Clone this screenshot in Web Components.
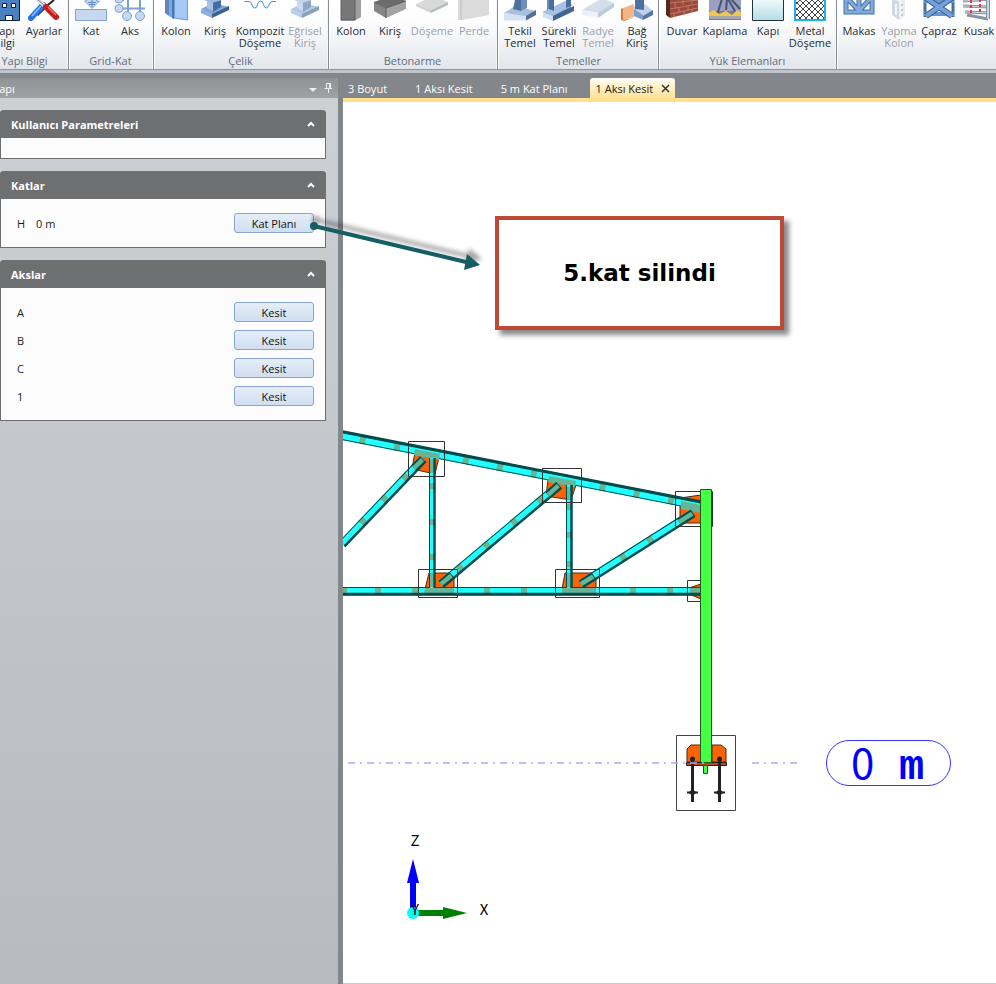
<!DOCTYPE html>
<html lang="tr">
<head>
<meta charset="utf-8">
<title>Yapı - 1 Aksı Kesit</title>
<style>
html,body{margin:0;height:100%}
body{font-family:"Open Sans","Noto Sans",sans-serif;font-size:11px;color:#1e1e1e;background:#83868b;overflow:hidden}
</style>
</head>
<body>
<structure-app></structure-app>
<script>
const define=(name,html,setup)=>customElements.define(name,class extends HTMLElement{
  constructor(){super();this.attachShadow({mode:"open"}).innerHTML=typeof html==="function"?html(this):html;if(setup)setup(this);}
});

/* Ribbon artwork: the lower 21 rows of each 32px icon. */
const icons={
building:`<path fill="#4a7fc0" stroke="#0b1d3a" d="M0-2h31.500v22.500H0z"/><path fill="#fff" stroke="#0b1d3a" d="M6 3.500h4v4H6zM14.500 3.500h4v4h-4zM23.500 3.500h4v4h-4zM6 12.500h4v4H6zM17.500 15.500h7v5h-7z"/>`,
tools:`<path d="M26 0 10 13" stroke="#222" stroke-width="2"/><path d="M18 4 8 14" stroke="#1c3d7c" stroke-width="6"/><path d="M15 5 3 18" stroke="#2a75e0" stroke-width="6" stroke-linecap="round"/><path d="M13 6 4 16" stroke="#8fc0ff" stroke-width="1.500"/><path d="m9-1 9 8" stroke="#d9dee5" stroke-width="4"/><path d="m9-1 9 8" stroke="#7d8792" stroke-width="1"/><path d="m18 7 10 10" stroke="#c71d16" stroke-width="6" stroke-linecap="round"/><path d="m20 7 8 8" stroke="#f5776d" stroke-width="1.500"/>`,
floor:`<path fill="#c7d7ee" stroke="#7fa3d4" d="M.5 9.500h31v11H.5z"/><path fill="#c7d7ee" stroke="#7fa3d4" d="M11.500-1v2h-2L17 8.500 24.500 1h-3v-2z"/><path stroke="#5d8ccb" fill="none" d="M13 2.500h8M14 4.500h6M17 0v7"/>`,
axes:`<g fill="none" stroke="#7aa0d5" stroke-width="2"><path d="M6 8.500h25M14 0v12M26 0v12M6 0h4"/></g><g fill="#c7d7ee" stroke="#7fa3d4"><circle cx="5" cy="-1" r="4"/><circle cx="5" cy="8.500" r="4"/><circle cx="13" cy="16" r="4.500"/><circle cx="26" cy="16" r="4.500"/></g>`,
steelcol:`<path fill="#5f87bd" d="M5-1h4v17l-4-3z"/><path fill="#7aa9e5" d="M9-1h5v20l-5-3z"/><path fill="#a6c8f7" d="M14-1h14v21.500l-14-2z"/><path fill="#4d78b1" d="M12-1h2v20l-2-1z"/><path fill="none" stroke="#739dd4" d="M14.500 0v18l13 2V0"/>`,
steelbeam:`<path fill="#86a5cf" d="M2 9 14 3l16 4-17 8z"/><path fill="#8fb0dd" d="M2 9v4l11 5v-4z"/><path fill="#3c6194" d="m13 14 17-8v4L13 18z"/><path fill="#a9c3e6" d="m8 0 6 2v9l-6-3z"/><path fill="#476d9f" d="m14 2 8-3v8l-8 5z"/><path fill="#9bb9e0" d="M2-1h24L13 3z"/>`,
composite:`<path d="M.5 1.500H5Q7 1.500 8 5t3 3q2 0 2.500-3.500t3-3.500q2 0 3 3.500T22 8q2 0 3-3t3-3.500h4" fill="none" stroke="#3e91d2"/>`,
rccol:`<path fill="#777" d="M6-1h14v21.500H6z"/><path fill="#9f9f9f" d="m20-1 6-1v19l-6 3.500z"/><path d="M6 0v20h14V0" fill="none" stroke="#606060"/>`,
rcbeam:`<path fill="#6b6b6b" d="M0 2 19-5l13 6-19 7z"/><path fill="#858585" d="M0 2v9l12 7V8z"/><path fill="#a3a3a3" d="m12 8 20-7v8l-20 9z"/><path d="m0 2 12 6 20-7M12 8v10" fill="none" stroke="#5c5c5c"/>`,
slab:`<path fill="#bfc1c4" d="M0 4 18-4l14 6-17 8z"/><path fill="#8f9194" d="m15 10 17-8v3l-17 8z"/><path fill="#b0b1b4" d="m0 4 15 6v3L0 6z"/>`,
wall:`<path fill="#c4c4c4" d="M0-1h31v16L4 20H0z"/><path d="M3-1v21" stroke="#999"/>`,
pad:`<path fill="#a9bfdc" d="M0 13 11 6l21 5-10 6z"/><path fill="#4d719f" d="m11 0 6-1v12l-8-2z"/><path fill="#6d8fbd" d="M17-1h6v9l-6 3z"/><path fill="#d3e2f4" d="m0 13 22 3v4.500H0z"/><path fill="#526f96" d="m22 16 10-6v5l-10 5.500z"/>`,
strip:`<path fill="#6c8ebb" d="M4 0h5v11l14-7V-1h5v10L9 20l-9-4v-4l4-2z"/><path fill="#a8c1e3" d="M0 12 22 1l8 4-20 11z"/><path fill="#42648f" d="m10 16 21-10v5L10 21z"/><path fill="#d1dff2" d="m0 12 10 4v5L0 17z"/><path fill="#496d9c" d="M6-1h5v12l-5-2zm17 0h5v7l-5 2z"/>`,
raft:`<path fill="#b8cadd" d="M0 10 20-2l12 5-15 10z"/><path fill="#e1ebf5" d="m0 10 16 3v5L0 15z"/><path fill="#8da8c4" d="m16 13 16-10v4L16 18z"/>`,
tie:`<path fill="#bfd3ee" d="m12 7 12-3 8 7-10 6-10-2z"/><path fill="#4d719f" d="M14-1h9v11l-9-1z"/><path fill="#7f9fca" d="m13 9 9 6v5l-9-4z"/><path fill="#57779f" d="m22 16 10-6v5l-10 5z"/><path fill="#f3b584" d="m2 8 11-4v13L2 20z"/><path fill="#d47b3a" d="m2 8-2 1v11l3 1 9-3-10 2z"/>`,
brick:`<path fill="#9a4a3c" d="M4-1h28v12L4 18z"/><path fill="#562923" d="M0 0h4v18l-4-3z"/><path d="M4 3 32 0M4 9l28-5M4 14l28-6M9 2v6m8-8v5m9-6v5M13 7v6m9-7v5M8 13v4m10-6v4m8-6v3" stroke="#c07a66" fill="none"/>`,
cladding:`<path fill="#73799f" d="M0-1h32v21H0z"/><path fill="#9aa0c4" d="M0-1h32v12H0z"/><path d="M13-1 8 15M18-1l-1 11M19-1l8 14M22-1l9 10" stroke="#4c5272" stroke-width="2"/><path fill="#f0c94a" d="m0 12 5-2 5 4 7-3 6 4 5-5 4 2v5H0z"/><path fill="#a6a7ae" d="M0 16h32v3H0z"/>`,
door:`<defs><linearGradient id="g" x2="0" y2="1"><stop stop-color="#f4fbfc"/><stop offset="1" stop-color="#b4dce5"/></linearGradient></defs><path fill="url(#g)" stroke="#1e333c" d="M.5-2h31v22.500H.5z"/>`,
mesh:`<defs><pattern id="m" width="6" height="6" patternUnits="userSpaceOnUse"><path d="M0 0l6 6M6 0 0 6" stroke="#444"/></pattern></defs><path fill="#fff" d="M0-1h32v22H0z"/><path fill="url(#m)" d="M0-1h32v22H0z"/><path fill="none" stroke="#1bb4e8" stroke-width="2" d="M1-1v21h30V-1"/>`,
truss:`<path fill="none" stroke="#45709e" stroke-width="5" d="M3-1v13h26V-1M5-1l11 12L27-1M16 0v12"/><path fill="none" stroke="#7fabdf" stroke-width="3" d="M3-1v13h26V-1M5-1l11 12L27-1M16 0v12"/>`,
built:`<path fill="#b3c0cf" d="m9-1 7 2v19l-7-5z"/><path fill="#d9e2eb" d="m16 1 6-2v17l-6 4z"/><path d="M18 2v15m-5-13v11" stroke="#eff3f7" stroke-width="2"/><path d="M19 4v2m0 3v2m0 3v2" stroke="#97a6b6" stroke-width="2"/>`,
brace:`<path d="M2-1v18M30-1v18" stroke="#45709e" stroke-width="3"/><path d="M1 14h30M1 1h30" stroke="#6a98cf" stroke-width="4"/><path d="M3-2 29 16M29-2 3 16" stroke="#335f94" stroke-width="6"/><path d="M3-2 29 16M29-2 3 16" stroke="#74a1d7" stroke-width="4"/>`,
purlin:`<path d="m0 1 27-2M0 6l27 1M2 12l25 1M4 15l21 4" stroke="#8793a5" stroke-width="3"/><path d="m0 1 27-2M0 6l27 1M2 12l25 1" stroke="#cbd3de"/><path d="M8 0v13M17-1v15" stroke="#dd3940" stroke-width="2" stroke-dasharray="3 2"/><path d="M25-1v20" stroke="#8391a5" stroke-width="4"/><path d="M25-1v20" stroke="#cbd3de" stroke-width="2"/>`
};

define("ribbon-item",el=>`<style>
:host{display:block;flex:0 0 auto;width:var(--item-width,38px)}
button{display:flex;flex-direction:column;align-items:center;width:100%;padding:0;border:0;background:none;font:inherit;line-height:12px;color:#262b33;white-space:nowrap}
:host([dim]) button{color:#9ba0a8}
svg{display:block;width:32px;height:21px;margin-bottom:4px}
:host([dim]) svg{opacity:.6}
</style><button type="button"${el.hasAttribute("dim")?" disabled":""}><svg viewBox="0 0 32 21" aria-hidden="true" fill="none">${icons[el.getAttribute("icon")]}</svg>${el.getAttribute("label").split("|").map(t=>`<span>${t}</span>`).join("")}</button>`);

define("ribbon-group",el=>`<style>
:host{display:flex;flex-direction:column;justify-content:space-between;flex:0 0 auto;box-sizing:border-box;height:69px;padding:0 4px 0 3px;border-right:1px solid #888c93;box-shadow:inset -1px 0 #f4f6f8,inset 1px 0 #fff}
.items{display:flex;gap:var(--item-gap,1px)}
.name{line-height:16px;text-align:center;color:#626b7e}
</style><div class="items"><slot></slot></div><div class="name">${el.getAttribute("name")||""}</div>`);

define("ribbon-bar",`<style>
:host{display:flex;height:69px;overflow:hidden;background:linear-gradient(#fff 0,#fdfdfe 32%,#e2e6ec 100%);border-bottom:1px solid #8f939a;box-shadow:0 3px #c0c5cd}
.first{margin-left:-18px}
.tight{padding-right:2px}
.roomy{padding-left:4px}
.last{flex:1 0 auto}
.wide{--item-width:44px}.wider{--item-width:50px}.facing{--item-width:46px}
</style>
<ribbon-group class="first" name="Yapı Bilgi"><ribbon-item icon="building" label="Yapı|Bilgi"></ribbon-item><ribbon-item icon="tools" label="Ayarlar" style="--item-width:40px"></ribbon-item></ribbon-group>
<ribbon-group name="Grid-Kat"><ribbon-item icon="floor" label="Kat"></ribbon-item><ribbon-item icon="axes" label="Aks"></ribbon-item></ribbon-group>
<ribbon-group name="Çelik"><ribbon-item icon="steelcol" label="Kolon"></ribbon-item><ribbon-item icon="steelbeam" label="Kiriş"></ribbon-item><ribbon-item class="wider" icon="composite" label="Kompozit|Döşeme"></ribbon-item><ribbon-item dim icon="steelbeam" label="Eğrisel|Kiriş"></ribbon-item></ribbon-group>
<ribbon-group name="Betonarme"><ribbon-item icon="rccol" label="Kolon"></ribbon-item><ribbon-item icon="rcbeam" label="Kiriş"></ribbon-item><ribbon-item dim class="wide" icon="slab" label="Döşeme"></ribbon-item><ribbon-item dim icon="wall" label="Perde"></ribbon-item></ribbon-group>
<ribbon-group class="tight" name="Temeller"><ribbon-item icon="pad" label="Tekil|Temel"></ribbon-item><ribbon-item icon="strip" label="Sürekli|Temel"></ribbon-item><ribbon-item dim icon="raft" label="Radye|Temel"></ribbon-item><ribbon-item icon="tie" label="Bağ|Kiriş"></ribbon-item></ribbon-group>
<ribbon-group class="roomy" name="Yük Elemanları"><ribbon-item icon="brick" label="Duvar"></ribbon-item><ribbon-item class="facing" icon="cladding" label="Kaplama"></ribbon-item><ribbon-item icon="door" label="Kapı"></ribbon-item><ribbon-item class="wide" icon="mesh" label="Metal|Döşeme"></ribbon-item></ribbon-group>
<ribbon-group class="last" style="--item-gap:2px"><ribbon-item icon="truss" label="Makas"></ribbon-item><ribbon-item dim icon="built" label="Yapma|Kolon"></ribbon-item><ribbon-item icon="brace" label="Çapraz"></ribbon-item><ribbon-item icon="purlin" label="Kusak"></ribbon-item></ribbon-group>`);

define("side-section",el=>`<style>
:host{display:block;border:1px solid #6d6e70;border-top:0;border-radius:4px 4px 0 0;background:#fcfcfc}
h2{display:flex;align-items:center;justify-content:space-between;margin:0 -1px;height:28px;padding:0 11px;border-radius:4px 4px 0 0;background:#6e6f71;color:#fff;font:inherit;font-weight:700}
h2 button{display:flex;padding:0;border:0;background:none;color:#fff}
.body{display:flex;flex-direction:column;gap:8px;padding:14px 11px 14px 16px}
:host([empty]) .body{height:20px;padding:0}
</style><h2>${el.getAttribute("heading")}<button type="button" aria-label="Daralt"><svg width="8" height="6" fill="none" stroke="currentColor" stroke-width="2"><path d="m1 5 3-3 3 3"/></svg></button></h2><div class="body"><slot></slot></div>`);

define("section-row",el=>`<style>
:host{display:flex;align-items:center;height:20px}
.key{min-width:19px}
button{margin-left:auto;width:80px;height:20px;padding:0;border:1px solid #86a5d0;border-radius:3px;background:linear-gradient(#e6eef8,#cfdef1);font:inherit;color:#111}
</style><span class="key" id="k">${el.getAttribute("key")}</span><span>${el.getAttribute("value")||""}</span><button type="button" id="b" aria-labelledby="k b">${el.getAttribute("action")}</button>`);

define("side-panel",`<style>
:host{display:block;background:linear-gradient(#cdd0d5,#b7bbc0);border-radius:0 3px 0 0}
header{display:flex;align-items:center;height:20px;background:linear-gradient(#909396,#a0a2a5);color:#fff;border-radius:0 3px 0 0;overflow:hidden}
.title{margin-left:-7px;flex:1}
header svg{display:block;margin-right:6px}
.stack{display:flex;flex-direction:column;gap:12px;padding:12px 12px 12px 0}
</style>
<header><span class="title">Yapı</span><svg width="24" height="12" fill="none" stroke="#eee"><path fill="#eee" stroke="none" d="M1 6h8L5 10z"/><path d="M18.500 6V1.500h4V6M16.500 6.500h8M20.500 7v4M21.500 2v4"/></svg></header>
<div class="stack">
<side-section heading="Kullanıcı Parametreleri" empty></side-section>
<side-section heading="Katlar"><section-row key="H" value="0 m" action="Kat Planı"></section-row></side-section>
<side-section heading="Akslar"><section-row key="A" action="Kesit"></section-row><section-row key="B" action="Kesit"></section-row><section-row key="C" action="Kesit"></section-row><section-row key="1" action="Kesit"></section-row></side-section>
</div>`);

define("view-tabs",`<style>
:host{display:flex;height:20px;padding-left:5px;gap:28px;border-bottom:4px solid #ffe08f}
button{border:0;padding:0;background:none;color:#fff;font:inherit;white-space:nowrap}
.active{display:flex;align-items:center;gap:8px;margin-left:-6px;padding:0 5px 0 6px;background:linear-gradient(#fffef8,#ffe190);color:#222;border-radius:3px 3px 0 0}
</style><button type="button">3 Boyut</button><button type="button">1 Aksı Kesit</button><button type="button">5 m Kat Planı</button><button type="button" class="active">1 Aksı Kesit<svg width="9" height="9" stroke="#333" stroke-width="1.500"><path d="m1 1 7 7M8 1 1 8"/></svg></button>`);

/* Steel section with a cyan flange, a dark web line and stitch plates. */
const member=(x1,y1,x2,y2,w,marks,side=1)=>{
  const L=Math.hypot(x2-x1,y2-y1),a=Math.atan2(y2-y1,x2-x1)*180/Math.PI,e=side>0?w/2-.5:-w/2+.5;
  return `<g transform="translate(${x1} ${y1}) rotate(${a})"><path fill="#2ff" d="M0 ${-w/2}H${L}V${w/2}H0z"/>${marks.map(m=>`<path fill="#66b596" d="M${m-3} ${-w/2}h6v${w}h-6z"/>`).join("")}<path stroke="#004c4c" stroke-width="1" d="M0 ${-e}H${L}"/><path stroke="#004c4c" stroke-width="2.500" d="M0 ${e}H${L}"/></g>`;
};
const chordMarks=[362.7,397.3,466,500,534,602.7,636.7,671].map(x=>(x-342)*1.0188);
const stub=(x,y,dx,dy)=>`<path stroke="#004c4c" stroke-width="8" d="M${x} ${y}l${dx} ${dy}"/><path stroke="#66b596" stroke-width="4.500" d="M${x} ${y}l${dx*.94} ${dy*.94}"/>`;
define("model-view",`<style>
:host{display:block;position:relative;overflow:hidden;background:#fff;border-bottom:1px solid #c8cbd0}
svg{position:absolute;inset:0;width:100%;height:100%}
.axis{font:15px "Noto Sans CJK JP",sans-serif;fill:#000;text-anchor:middle}
.level{font:42px "Noto Sans CJK JP",sans-serif;fill:#00f}
.unit{font-family:"Liberation Mono",monospace;font-weight:700}
</style>
<svg fill="none"><g transform="translate(-343 -102)">
<g fill="#ff6200" stroke="#4c2a10"><path d="m415 452 24 5-4 17-23-5zM548 480l28 5-5 15-25-4zM680 498l21-3v28h-21zM429 573h25v16h-29zM565 573h31v16h-34zM701 584l-12 4v6l12 5z"/></g>
${member(342,435.5,702,506,9,chordMarks,-1)}
${member(342,591,702,591,8,[2,36,73,145,182,291,328])}
<path fill="#66b596" d="m415 449 25 5-1 6-25-5zM549 476l27 5-1 6-27-5zM681 501l20 4v8l-20-4zM425 588h29v5h-30zM562 588h34v5h-34zM690 588h11v5h-11z"/>
<path stroke="#004c4c" stroke-width="2.500" d="m342 432 360 70.500M342 594h360"/>
${member(342,544,423,459,8,[31,62,92])}
${member(432,458,432,588,6,[28,64,99],-1)}
${member(441,584,559,485,8,[25,60,96,130])}
${member(569,485,569,588,6,[22,50,79],-1)}
${member(581,584,693,513,8,[50,82])}
${stub(414,468,9,-9)}${stub(441,584,11,-9)}${stub(548,495,11,-10)}${stub(581,584,13,-8)}${stub(679,522,14,-9)}
<path stroke="#66b596" stroke-width="3" d="M431.500 459v14M568.500 487v13M431.500 573v14M568.500 573v14"/>
<path stroke="#333" d="M408.500 441.500h36v35h-36zM542.500 468.500h39v34h-39zM418.500 569.500h39v28h-39zM555.500 569.500h44v28h-44zM675.500 491.500h37v35h-37zM687.500 580.500h14v21h-14z"/>
<path stroke="#444" d="M676.500 735.500h59v75h-59z"/>
<path fill="#ff6200" stroke="#4c2a10" d="M687 762v-13l4-4h10v17zM712 762v-17h9l5 4v13z"/><path fill="#b94b10" stroke="#222" d="M686.500 762.500h40v3h-40z"/>
<path fill="#4f4" stroke="#175c17" d="M703.500 765.500h4v8h-4zM700.500 489.500h11v273h-11z"/>
<path stroke="#222" stroke-width="3" d="M692.500 757v45M719.500 757v45"/><path stroke="#222" stroke-width="2" d="M687 792.500h11M714 792.500h11"/><path fill="#222" d="m692.500 789 4 3.500-4 3.500-4-3.500zM719.500 789l4 3.500-4 3.500-4-3.500z"/><circle cx="692.500" cy="759" r="2.500" fill="#222"/><circle cx="719.500" cy="759" r="2.500" fill="#222"/>
<path stroke="#aaf" stroke-width="1.500" stroke-dasharray="7 5 2 5" d="M348 763h361M752 763h46"/>
<rect x="826.500" y="740.500" width="124" height="45" rx="22.500" stroke="#33f"/>
<text class="level" y="779"><tspan x="851">0 </tspan><tspan class="unit" x="899">m</tspan></text>
<path fill="#00f" d="M410 911v-28h-3l6-24 6 24h-3v28z"/><path fill="#008000" d="M416 910h27v-3l24 6-24 6v-3h-27z"/><circle cx="413" cy="913" r="6" fill="#0ff"/>
<text class="axis" x="415" y="846">Z</text><text class="axis" x="484" y="915">X</text><text class="axis" x="415" y="915">Y</text>
</g></svg><slot></slot>`);

define("note-box",`<style>
:host{position:absolute;left:152px;top:114px;display:grid;place-items:center;box-sizing:border-box;width:289px;height:114px;border:4px solid #bf4a33;background:#fff;box-shadow:5px 5px 5px #888;color:#000;font:700 23px "DejaVu Sans",sans-serif}
</style><slot></slot>`);

define("note-arrow",`<style>
:host{position:absolute;left:300px;top:210px;width:200px;height:80px;pointer-events:none}
svg{display:block;filter:drop-shadow(2px -6px 2px rgba(0,0,0,.35))}
</style><svg width="200" height="80"><path stroke="#145e64" stroke-width="4" d="m14 16 152 36"/><circle cx="14" cy="16" r="4" fill="#145e64"/><path fill="#145e64" d="m164 60 16-5-13-11z"/></svg>`);

define("structure-app",`<style>
:host{display:flex;flex-direction:column;position:relative;min-height:100vh}
main{flex:1;display:grid;grid-template-columns:338px minmax(0,1fr);column-gap:5px;padding-top:8px}
.view{display:flex;flex-direction:column;min-width:0}
model-view{flex:1}
</style>
<ribbon-bar></ribbon-bar>
<main><side-panel></side-panel><div class="view"><view-tabs></view-tabs><model-view><note-box>5.kat silindi</note-box></model-view></div></main>
<note-arrow></note-arrow>`);
</script>
</body>
</html>
